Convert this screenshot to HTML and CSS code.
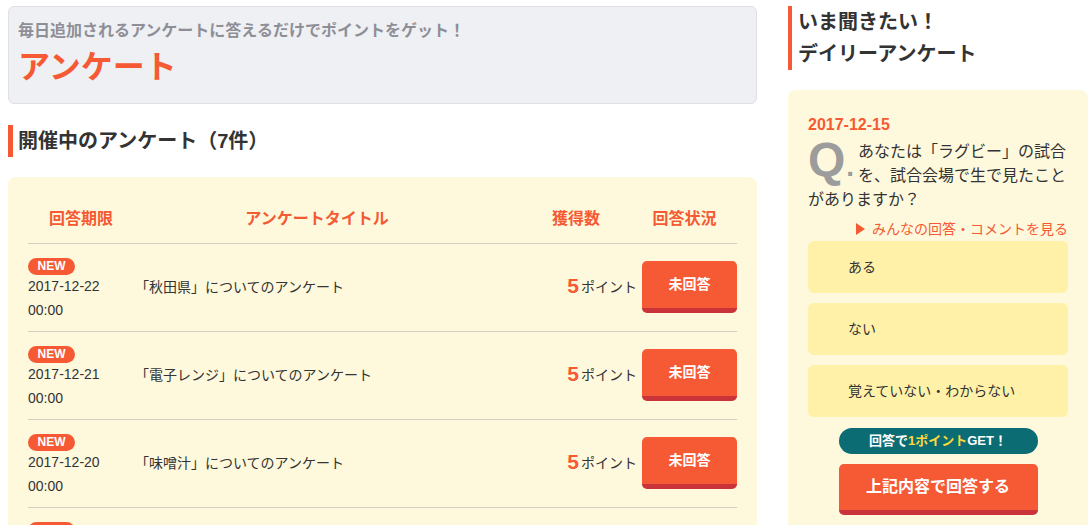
FILE: index.html
```html
<!DOCTYPE html>
<html lang="ja">
<head>
<meta charset="utf-8">
<title>アンケート</title>
<link rel="stylesheet" href="styles.css">
</head>
<body>
<div class="page">
  <main class="main">
    <header class="page-head">
      <p class="page-lead">毎日追加されるアンケートに答えるだけでポイントをゲット！</p>
      <h1 class="page-title">アンケート</h1>
    </header>

    <h2 class="sec-title">開催中のアンケート（7件）</h2>

    <section class="list">
      <div class="list-head">
        <div class="h-date">回答期限</div>
        <div class="h-title">アンケートタイトル</div>
        <div class="h-pt">獲得数</div>
        <div class="h-status">回答状況</div>
      </div>

      <div class="row">
        <div class="c-date"><span class="badge">NEW</span><span class="d">2017-12-22</span><span class="d">00:00</span></div>
        <div class="c-title">「秋田県」についてのアンケート</div>
        <div class="c-pt"><span class="num">5</span>ポイント</div>
        <div class="c-status"><a class="btn-small">未回答</a></div>
      </div>

      <div class="row">
        <div class="c-date"><span class="badge">NEW</span><span class="d">2017-12-21</span><span class="d">00:00</span></div>
        <div class="c-title">「電子レンジ」についてのアンケート</div>
        <div class="c-pt"><span class="num">5</span>ポイント</div>
        <div class="c-status"><a class="btn-small">未回答</a></div>
      </div>

      <div class="row">
        <div class="c-date"><span class="badge">NEW</span><span class="d">2017-12-20</span><span class="d">00:00</span></div>
        <div class="c-title">「味噌汁」についてのアンケート</div>
        <div class="c-pt"><span class="num">5</span>ポイント</div>
        <div class="c-status"><a class="btn-small">未回答</a></div>
      </div>

      <div class="row">
        <div class="c-date"><span class="badge">NEW</span><span class="d">2017-12-19</span><span class="d">00:00</span></div>
        <div class="c-title">「お正月」についてのアンケート</div>
        <div class="c-pt"><span class="num">5</span>ポイント</div>
        <div class="c-status"><a class="btn-small">未回答</a></div>
      </div>
    </section>
  </main>

  <aside class="side">
    <h2 class="side-title">いま聞きたい！<br>デイリーアンケート</h2>
    <div class="daily">
      <p class="daily-date">2017-12-15</p>
      <p class="question"><span class="q-mark">Q<span class="q-dot">.</span></span>あなたは「ラグビー」の試合を、試合会場で生で見たことがありますか？</p>
      <p class="daily-link"><span class="tri"></span>みんなの回答・コメントを見る</p>
      <ul class="options">
        <li class="option">ある</li>
        <li class="option">ない</li>
        <li class="option">覚えていない・わからない</li>
      </ul>
      <p class="get-pill">回答で<span class="hl">1ポイント</span>GET！</p>
      <a class="btn-answer">上記内容で回答する</a>
    </div>
  </aside>
</div>
</body>
</html>
```

FILE: styles.css
```css
* { box-sizing: border-box; }
html, body { margin: 0; padding: 0; background: #fff; }
body {
  font-family: "Liberation Sans", "Noto Sans CJK JP", sans-serif;
  color: #333;
  font-size: 14px;
  overflow: hidden;
  height: 525px;
}
p, h1, h2, ul { margin: 0; padding: 0; }
ul { list-style: none; }

.page {
  display: flex;
  gap: 31px;
  padding: 6px 4px 0 8px;
}
.main { width: 749px; flex: none; }
.side { width: 300px; flex: none; }

/* header */
.page-head {
  background: #eff0f4;
  border: 1px solid #dfe0e5;
  border-radius: 6px;
  padding: 12px 9px 12px;
}
.page-lead {
  font-size: 16px;
  line-height: 24px;
  font-weight: bold;
  color: #8e8f96;
}
.page-title {
  font-size: 32px;
  line-height: 48px;
  font-weight: bold;
  color: #f55a34;
}

.sec-title {
  margin-top: 21px;
  border-left: 5px solid #f55a34;
  padding-left: 5px;
  font-size: 20px;
  line-height: 32px;
  font-weight: bold;
  color: #333;
}

/* list */
.list {
  margin-top: 20px;
  background: #fef9dd;
  border-radius: 8px;
  padding: 0 20px;
}
.list-head, .row {
  display: grid;
  grid-template-columns: 106px 1fr 134px 95px;
  border-bottom: 1px solid #cfcfc8;
}
.list-head {
  padding: 30px 0 12px;
  font-size: 16px;
  line-height: 24px;
  font-weight: bold;
  color: #f55a34;
  text-align: center;
}
.h-title { padding-right: 8px; }
.h-pt { padding-left: 2px; }
.h-status { padding-right: 10px; }

.row {
  padding: 14px 0 9px;
  align-items: center;
}
.c-date { display: flex; flex-direction: column; align-items: flex-start; }
.badge {
  display: inline-block;
  width: 47px;
  height: 17px;
  border-radius: 9px;
  background: #f55a34;
  color: #fff;
  font-size: 12px;
  line-height: 17px;
  font-weight: bold;
  text-align: center;
  margin-bottom: -1px;
}
.d { font-size: 14px; line-height: 24px; }
.c-title, .c-pt, .c-status { margin-bottom: 7px; }
.c-title { padding-left: 1px; font-size: 14px; line-height: 24px; }
.c-pt {
  text-align: right;
  font-size: 14px;
  line-height: 24px;
  padding-right: 5px;
  white-space: nowrap;
}
.num {
  font-size: 21px;
  font-weight: bold;
  color: #f55a34;
  margin-right: 2px;
  vertical-align: -1px;
}
.btn-small {
  display: block;
  height: 52px;
  border-radius: 5px;
  background: #f55a34;
  border-bottom: 5px solid #c9333a;
  color: #fff;
  font-size: 14px;
  font-weight: bold;
  line-height: 47px;
  text-align: center;
}

/* side */
.side-title {
  border-left: 4px solid #f55a34;
  padding-left: 6px;
  font-size: 20px;
  line-height: 32px;
  font-weight: bold;
  color: #333;
}
.daily {
  margin-top: 20px;
  background: #fef9dd;
  border-radius: 8px;
  padding: 22px 20px 30px;
}
.daily-date {
  font-size: 16px;
  line-height: 26px;
  font-weight: bold;
  color: #f55a34;
}
.question {
  margin-top: 2px;
  font-size: 16px;
  line-height: 24px;
  color: #333;
}
.q-mark {
  float: left;
  width: 50px;
  height: 46px;
  margin-bottom: 2px;
  font-family: "Liberation Sans", sans-serif;
  font-size: 48px;
  line-height: 40px;
  font-weight: bold;
  color: #9c9c9c;
  white-space: nowrap;
}
.q-dot { font-size: 28px; margin-left: 1px; }
.daily-link {
  margin-top: 5px;
  text-align: right;
  font-size: 14px;
  line-height: 24px;
  color: #f55a34;
}
.tri {
  display: inline-block;
  width: 0; height: 0;
  border-left: 9px solid #f55a34;
  border-top: 6px solid transparent;
  border-bottom: 6px solid transparent;
  margin-right: 7px;
  vertical-align: -1px;
}
.options { margin-top: 0; }
.option {
  height: 52px;
  background: #fff1a8;
  border-radius: 6px;
  padding-left: 40px;
  font-size: 14px;
  line-height: 52px;
  color: #333;
  margin-bottom: 10px;
}
.get-pill {
  width: 199px;
  height: 26px;
  margin: 11px auto 0;
  border-radius: 13px;
  background: #0b6c73;
  color: #fff;
  text-align: center;
  font-size: 13px;
  line-height: 26px;
  font-weight: bold;
}
.hl { color: #ffd93a; }
.btn-answer {
  display: block;
  width: 199px;
  height: 51px;
  margin: 10px auto 0;
  border-radius: 5px;
  background: #f55a34;
  border-bottom: 5px solid #c9333a;
  color: #fff;
  font-size: 16px;
  font-weight: bold;
  text-align: center;
  line-height: 46px;
}
```
